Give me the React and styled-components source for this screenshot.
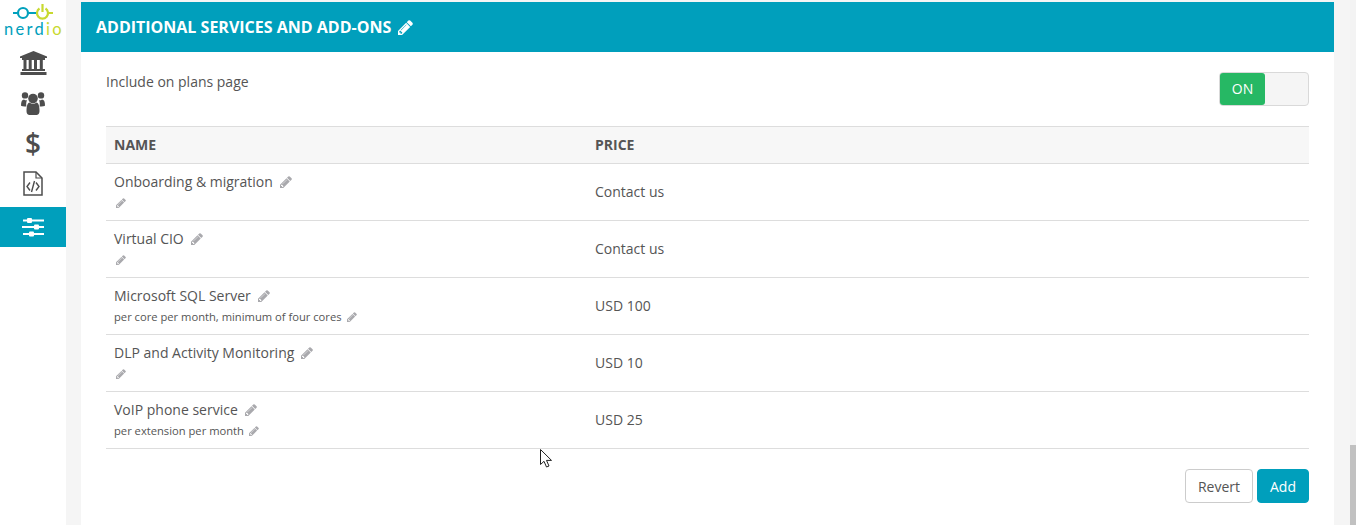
import React from "react"
import styled, { createGlobalStyle } from "styled-components"

const GlobalStyle = createGlobalStyle`
  html, body {
    margin: 0;
    height: 525px;
    overflow: hidden;
    background: #f5f5f5;
    font-family: "Open Sans", "Liberation Sans", sans-serif;
    font-size: 14px;
    color: #555;
  }
`

const Page = styled.div`
  display: flex;
  height: 525px;
  overflow: hidden;
`

const Sidebar = styled.nav`
  width: 66px;
  flex: none;
  background: #fff;
  display: flex;
  flex-direction: column;
`

const Logo = styled.div`
  height: 43px;
  display: flex;
  flex-direction: column;
  align-items: center;
  padding-top: 3px;
  box-sizing: border-box;
`

const LogoText = styled.div`
  font-family: "Lato", sans-serif;
  font-size: 16.5px;
  line-height: 15px;
  letter-spacing: 2.3px;
  margin-top: 1px;
  padding-left: 2px;
  color: #00a0bc;
  white-space: nowrap;

  span {
    color: #c8d92f;
  }
`

const NavItem = styled.div`
  height: 40px;
  margin-top: ${(p) => (p.$active ? "4px" : "0")};
  display: flex;
  align-items: center;
  justify-content: center;
  background: ${(p) => (p.$active ? "#009fbc" : "transparent")};
  color: ${(p) => (p.$active ? "#fff" : "#4d4d4d")};
`

const DollarGlyph = styled.span`
  font-size: 28px;
  font-weight: 600;
  line-height: 40px;
  color: #4d4d4d;
`

const Main = styled.main`
  flex: 1;
  padding: 2px 22px 0 15px;
  min-width: 0;
`

const Panel = styled.section`
  background: #fff;
  height: 530px;
`

const PanelHeader = styled.header`
  height: 50px;
  background: #009fbc;
  color: #fff;
  padding: 0 15px;
  display: flex;
  align-items: center;
  gap: 7px;
  font-size: 16px;
  font-weight: 700;
`

const PanelBody = styled.div`
  padding: 20px 25px;
`

const ToggleRow = styled.div`
  display: flex;
  justify-content: space-between;
  align-items: flex-start;
  height: 54px;
  line-height: 20px;
`

const Toggle = styled.div`
  width: 90px;
  height: 34px;
  box-sizing: border-box;
  border: 1px solid #d9d9d9;
  border-radius: 4px;
  background: #f5f5f5;
  display: flex;
`

const ToggleOn = styled.div`
  width: 45px;
  background: #26b864;
  color: #fff;
  border-radius: 3px;
  display: flex;
  align-items: center;
  justify-content: center;
`

const Table = styled.table`
  width: 100%;
  border-collapse: collapse;
  table-layout: fixed;
`

const HeadCell = styled.th`
  height: 37px;
  padding: 0 8px 1px;
  box-sizing: border-box;
  background: #f7f7f7;
  border-top: 1px solid #ddd;
  border-bottom: 1px solid #ddd;
  text-align: left;
  font-size: 14px;
  font-weight: 700;
  color: #555;
  width: ${(p) => p.$width || "auto"};
`

const Row = styled.tr`
  height: 57px;
`

const Cell = styled.td`
  padding: 0 8px 2px;
  box-sizing: border-box;
  height: 57px;
  border-bottom: 1px solid #ddd;
  vertical-align: middle;
`

const ItemName = styled.div`
  display: flex;
  align-items: center;
  gap: 7px;
  height: 20px;
  line-height: 20px;
  margin-top: 1px;
`

const ItemNote = styled.div`
  display: flex;
  align-items: center;
  gap: 5px;
  height: 17px;
  margin-top: 2px;
  font-size: 11.2px;
`

const PencilSvg = styled.svg`
  flex: none;
  display: block;
  fill: ${(p) => p.$color || "#a9a9ad"};
  width: ${(p) => p.$size}px;
  height: ${(p) => p.$size}px;
  margin-left: ${(p) => p.$shift || 0}px;
`

const Actions = styled.div`
  display: flex;
  justify-content: flex-end;
  gap: 4px;
  margin-top: 20px;
`

const Button = styled.button`
  height: 34px;
  padding: 0 12px;
  border: 1px solid ${(p) => (p.$primary ? "#009fbc" : "#ccc")};
  border-radius: 4px;
  background: ${(p) => (p.$primary ? "#009fbc" : "#fff")};
  color: ${(p) => (p.$primary ? "#fff" : "#555")};
  font: inherit;
`

const Scrollbar = styled.div`
  position: absolute;
  top: 0;
  right: 0;
  width: 6px;
  height: 525px;
  background: #f3f3f3;

  &::after {
    content: "";
    position: absolute;
    left: 0;
    right: 0;
    top: 445px;
    bottom: 0;
    background: #c1c1c1;
  }
`

const Cursor = styled.svg`
  position: absolute;
  left: 540px;
  top: 449px;
`

const Pencil = ({ size = 12, color, shift }) => (
  <PencilSvg viewBox="128 128 1536 1536" $size={size} $color={color} $shift={shift}>
    <path d="M491 1536l91-91-235-235-91 91v107h128v128h107zm523-928q0-22-22-22-10 0-17 7l-542 542q-7 7-7 17 0 22 22 22 10 0 17-7l542-542q7-7 7-17zm-54-192l416 416-832 832h-416v-416zm683 96q0 53-37 90l-166 166-416-416 166-165q36-38 90-38 53 0 91 38l235 234q37 39 37 91z" />
  </PencilSvg>
)

const LogoMark = () => (
  <svg width="40" height="18" viewBox="0 0 40 18" fill="none" strokeWidth="2.2">
    <path d="M0 10h4M16 10h7" stroke="#00a0bc" />
    <circle cx="10" cy="10" r="5" stroke="#00a0bc" />
    <path d="M23 10h1M35 10h5" stroke="#c8d92f" />
    <path d="M26.500 5.500a5.500 5.500 0 1 0 6 0M29.500 1v8" stroke="#c8d92f" />
  </svg>
)

const BankIcon = () => (
  <svg width="27" height="24" viewBox="0 0 27 24" fill="#4d4d4d">
    <path d="M13.5 0L27 5.5V7H0V5.5z" />
    <rect x="2" y="7" width="23" height="2" />
    <rect x="3.5" y="9" width="3" height="9" />
    <rect x="8.7" y="9" width="3" height="9" />
    <rect x="14" y="9" width="3" height="9" />
    <rect x="19.8" y="9" width="3" height="9" />
    <rect x="2" y="18" width="23" height="2" />
    <rect x="0.5" y="21" width="26" height="3" />
  </svg>
)

const UsersIcon = () => (
  <svg width="24" height="23" viewBox="0 0 24 23" fill="#4d4d4d">
    <circle cx="4" cy="3.4" r="3.2" />
    <circle cx="20" cy="3.4" r="3.2" />
    <path d="M0 13.5c0-4 1-6 3-6 1 .8 2 1 3 .8-.8 1.600-1 3.700-.6 6.200-2.700 0-5.400-.2-5.400-1z" />
    <path d="M24 13.500c0-4-1-6-3-6-1 .8-2 1-3 .8.800 1.600 1 3.700.6 6.200 2.700 0 5.400-.2 5.400-1z" />
    <circle cx="12" cy="6.500" r="4.800" />
    <path d="M5.500 19c0-5 1-8 3-8.500 2 1.600 5 1.600 7 0 2 .5 3 3.500 3 8.500 0 4-2.500 4-4 4h-5c-1.500 0-4 0-4-4z" />
  </svg>
)

const CodeFileIcon = () => (
  <svg width="20" height="25" viewBox="0 0 20 25" fill="none" stroke="#4d4d4d">
    <path d="M1 1h12l6 6v17H1z" strokeWidth="1.5" />
    <path d="M13 1v6h6" strokeWidth="1.2" />
    <path d="M7 11.500l-3 4 3 4M13 11.500l3 4-3 4M11.500 10l-3 11" strokeWidth="1.4" />
  </svg>
)

const SlidersIcon = () => (
  <svg width="22" height="19" viewBox="0 0 22 19" fill="#fff">
    <rect x="1" y="1.500" width="21" height="2" />
    <rect x="5" y="0" width="5" height="5" rx="1" />
    <rect x="0" y="8" width="22" height="2" />
    <rect x="12" y="6.500" width="5" height="5" rx="1" />
    <rect x="1" y="15" width="21" height="2" />
    <rect x="7" y="13.500" width="5" height="5" rx="1" />
  </svg>
)

const services = [
  { name: "Onboarding & migration", note: "", price: "Contact us" },
  { name: "Virtual CIO", note: "", price: "Contact us" },
  { name: "Microsoft SQL Server", note: "per core per month, minimum of four cores", price: "USD 100" },
  { name: "DLP and Activity Monitoring", note: "", price: "USD 10" },
  { name: "VoIP phone service", note: "per extension per month", price: "USD 25" },
]

const App = () => (
  <Page>
    <GlobalStyle />
    <Sidebar>
      <Logo>
        <LogoMark />
        <LogoText>nerd<span>io</span></LogoText>
      </Logo>
      <NavItem><BankIcon /></NavItem>
      <NavItem><UsersIcon /></NavItem>
      <NavItem><DollarGlyph>$</DollarGlyph></NavItem>
      <NavItem><CodeFileIcon /></NavItem>
      <NavItem $active><SlidersIcon /></NavItem>
    </Sidebar>
    <Main>
      <Panel>
        <PanelHeader>
          ADDITIONAL SERVICES AND ADD-ONS
          <Pencil size={15} color="#fff" />
        </PanelHeader>
        <PanelBody>
          <ToggleRow>
            Include on plans page
            <Toggle><ToggleOn>ON</ToggleOn></Toggle>
          </ToggleRow>
          <Table>
            <thead>
              <tr>
                <HeadCell $width="481px">NAME</HeadCell>
                <HeadCell>PRICE</HeadCell>
              </tr>
            </thead>
            <tbody>
              {services.map((s) => (
                <Row key={s.name}>
                  <Cell>
                    <ItemName>{s.name}<Pencil /></ItemName>
                    <ItemNote>{s.note}<Pencil size={10} shift={s.note ? 0 : 2} /></ItemNote>
                  </Cell>
                  <Cell>{s.price}</Cell>
                </Row>
              ))}
            </tbody>
          </Table>
          <Actions>
            <Button>Revert</Button>
            <Button $primary>Add</Button>
          </Actions>
        </PanelBody>
      </Panel>
    </Main>
    <Scrollbar />
    <Cursor width="14" height="20" viewBox="0 0 14 20">
      <path d="M.5.5v15l3.500-3.200 2.500 5.700 2.500-1-2.500-5.600h5z" fill="#fff" stroke="#222" strokeWidth="1" />
    </Cursor>
  </Page>
)

export default App
